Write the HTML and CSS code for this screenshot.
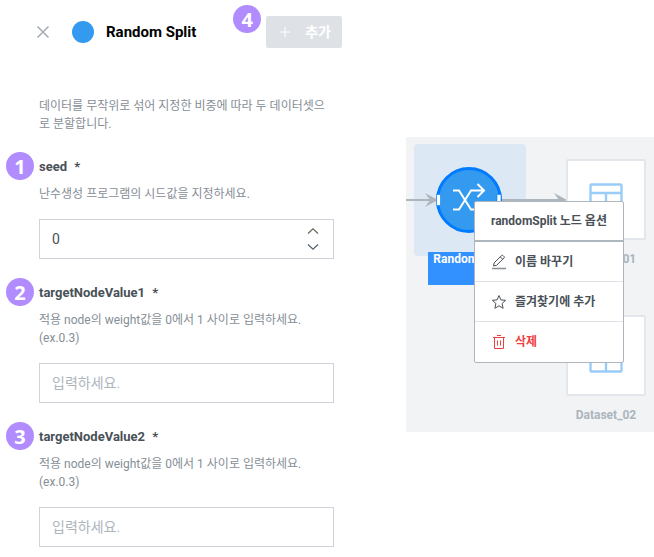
FILE: index.html
```html
<!DOCTYPE html>
<html lang="ko">
<head>
<meta charset="utf-8">
<title>Random Split</title>
<link rel="stylesheet" href="styles.css">
</head>
<body>
<main class="page">
  <form class="panel">
    <header class="panel-header">
      <button class="icon-button" type="button" aria-label="닫기">
        <svg width="14" height="14" viewBox="0 0 14 14"><path d="M1.500 1.500 12.500 12.500M12.500 1.500 1.500 12.500" fill="none" stroke="#a3abb3" stroke-width="1.500"/></svg>
      </button>
      <span class="dot"></span>
      <h1 class="title">Random Split</h1>
      <div class="add-wrap">
        <span class="badge badge-add">4</span>
        <button class="add-button" type="button">
          <svg width="10" height="10" viewBox="0 0 10 10"><path d="M5 0V10M0 5H10" stroke="#fff" stroke-width="1" fill="none"/></svg>
          <span>추가</span>
        </button>
      </div>
    </header>
    <div class="panel-body">
      <p class="hint intro">데이터를 무작위로 섞어 지정한 비중에 따라 두 데이터셋으로 분할합니다.</p>
      <div class="field">
        <span class="badge">1</span>
        <label class="label" for="seed">seed <span class="required">*</span></label>
        <p class="hint">난수생성 프로그램의 시드값을 지정하세요.</p>
        <div class="number-box">
          <input class="input" id="seed" type="text" inputmode="numeric" value="0">
          <div class="stepper">
            <button class="icon-button step" type="button" aria-label="증가"><svg width="12" height="6" viewBox="0 0 12 6"><path d="M1 5.500 6 .8 11 5.500" fill="none" stroke="#6b6459" stroke-width="1.200"/></svg></button>
            <button class="icon-button step" type="button" aria-label="감소"><svg width="12" height="6" viewBox="0 0 12 6"><path d="M1 .5 6 5.200 11 .5" fill="none" stroke="#4f6473" stroke-width="1.200"/></svg></button>
          </div>
        </div>
      </div>
      <div class="field">
        <span class="badge">2</span>
        <label class="label" for="target1">targetNodeValue1 <span class="required">*</span></label>
        <p class="hint">적용 node의 weight값을 0에서 1 사이로 입력하세요. (ex.0.3)</p>
        <input class="input" id="target1" type="text" placeholder="입력하세요.">
      </div>
      <div class="field">
        <span class="badge">3</span>
        <label class="label" for="target2">targetNodeValue2 <span class="required">*</span></label>
        <p class="hint">적용 node의 weight값을 0에서 1 사이로 입력하세요. (ex.0.3)</p>
        <input class="input" id="target2" type="text" placeholder="입력하세요.">
      </div>
    </div>
  </form>

  <section class="canvas">
    <div class="selection"></div>
    <svg class="edges" width="248" height="295" viewBox="0 0 248 295">
      <path d="M0 63H26M95 63H154" stroke="#adb5bd" stroke-width="2"/>
      <path d="M19 56 32 63 19 70 24 63ZM148 56 161 63 148 70 153 63Z" fill="#adb5bd"/>
    </svg>
    <div class="node split-node">
      <svg width="68" height="68" viewBox="0 0 68 68">
        <circle cx="34" cy="34" r="31.500" fill="#339af0" stroke="#007bff" stroke-width="3"/>
        <path d="M18 24.500H24L36 43.500H48M18 43.500H24L36 24.500H49M42.500 18 49 24.500 42.500 31" fill="none" stroke="#fff" stroke-width="2"/>
        <path d="M1.500 28.500h4v11h-4zM62 28.500h4v11h-4z" fill="#fff" stroke="#007bff" stroke-width=".6"/>
      </svg>
    </div>
    <div class="node-label split-label">RandomSplit</div>
    <div class="node dataset first">
      <div class="card"><svg width="34" height="34" viewBox="0 0 34 34"><path d="M2.500 1.500H31.500Q32.500 1.500 32.500 2.500V31.500Q32.500 32.500 31.500 32.500H2.500Q1.500 32.500 1.500 31.500V2.500Q1.500 1.500 2.500 1.500ZM1.500 10H32.500M17 10V32.500M1.500 21H32.500" fill="none" stroke="#99cdf8" stroke-width="2.400"/></svg></div>
      <div class="node-label">Dataset_01</div>
    </div>
    <div class="node dataset second">
      <div class="card"><svg width="34" height="34" viewBox="0 0 34 34"><path d="M2.500 1.500H31.500Q32.500 1.500 32.500 2.500V31.500Q32.500 32.500 31.500 32.500H2.500Q1.500 32.500 1.500 31.500V2.500Q1.500 1.500 2.500 1.500ZM1.500 10H32.500M17 10V32.500" fill="none" stroke="#99cdf8" stroke-width="2.400"/></svg></div>
      <div class="node-label">Dataset_02</div>
    </div>
    <div class="menu">
      <h2 class="menu-title">randomSplit 노드 옵션</h2>
      <button class="menu-item" type="button">
        <svg width="16" height="16" viewBox="0 0 16 16"><path d="M2.500 12 3.200 8.800 10.600 1.600Q11.400 .9 12.200 1.700L13 2.500Q13.700 3.300 12.900 4.100L5.600 11.300ZM9.300 2.900 11.700 5.300" fill="none" stroke="#495057" stroke-width="1"/><path d="M1 14.500H15" stroke="#868e96" stroke-width="1.500"/></svg>
        <span>이름 바꾸기</span>
      </button>
      <button class="menu-item" type="button">
        <svg width="16" height="16" viewBox="0 0 16 16"><path d="M8 1.500 9.900 5.900 14.600 6.300 11.100 9.500 12.100 14.300 8 11.800 3.900 14.300 4.900 9.500 1.400 6.300 6.100 5.900Z" fill="none" stroke="#495057" stroke-width="1"/></svg>
        <span>즐겨찾기에 추가</span>
      </button>
      <button class="menu-item danger" type="button">
        <svg width="16" height="16" viewBox="0 0 16 16"><path d="M2 3.500H14M6 1.500H10M3.500 3.500V14.500H12.500V3.500M6.500 6.500V11.500M9.500 6.500V11.500" fill="none" stroke="#f03e3e" stroke-width="1"/></svg>
        <span>삭제</span>
      </button>
    </div>
  </section>
</main>
</body>
</html>
```
FILE: styles.css
```css
* {
  box-sizing: border-box;
}

body {
  margin: 0;
  background: #fff;
  color: #495057;
  font-family: Roboto, "Noto Sans CJK KR", sans-serif;
  font-size: 12px;
  line-height: 18px;
}

h1,
h2,
p {
  margin: 0;
}

button,
input {
  font: inherit;
  color: inherit;
}

svg {
  display: block;
  flex: none;
}

.page {
  display: grid;
  grid-template-columns: 342fr 248fr;
  column-gap: 64px;
  align-items: start;
}

.panel-header {
  display: flex;
  align-items: center;
  padding: 16px 0 0 36px;
}

.icon-button {
  display: flex;
  padding: 0;
  border: 0;
  background: none;
}

.dot {
  width: 22px;
  height: 22px;
  margin: 0 12px 0 22px;
  border-radius: 50%;
  background: #339af0;
}

.title {
  color: #000;
  font-size: 15px;
  font-weight: 700;
}

.add-wrap {
  position: relative;
  margin-left: auto;
}

.add-button {
  display: flex;
  align-items: center;
  gap: 15px;
  height: 32px;
  padding: 0 11px 0 14px;
  border: 0;
  border-radius: 2px;
  background: #dee2e6;
  color: #fff;
  font-size: 14px;
  font-weight: 700;
}

.badge {
  position: absolute;
  top: -5px;
  left: -33px;
  width: 28px;
  height: 28px;
  border-radius: 50%;
  background: #b18cff;
  color: #fff;
  font-family: "Noto Sans", sans-serif;
  font-size: 20px;
  font-weight: 700;
  line-height: 30px;
  text-align: center;
}

.badge-add {
  top: -11px;
}

.panel-body {
  display: flex;
  flex-direction: column;
  gap: 24px;
  padding: 49px 8px 8px 39px;
}

.hint {
  color: #868e96;
}

.field {
  position: relative;
  display: flex;
  flex-direction: column;
}

.label {
  margin-bottom: 8px;
  font-size: 13px;
  font-weight: 700;
  line-height: 20px;
}

.required {
  margin-left: 4px;
}

.input {
  width: 100%;
  height: 40px;
  padding: 0 12px;
  border: 1px solid #ced4da;
  border-radius: 0;
  background: #fff;
  font-size: 14px;
}

.field > .input,
.number-box {
  margin-top: 16px;
}

.input::placeholder {
  color: #adb5bd;
  opacity: 1;
}

.number-box {
  position: relative;
}

.stepper {
  position: absolute;
  top: 4px;
  right: 15px;
}

.step {
  height: 16px;
  align-items: center;
}

.canvas {
  position: relative;
  min-height: 295px;
  margin-top: 137px;
  background: #f1f3f5;
}

.selection {
  position: absolute;
  top: 7px;
  left: 8px;
  width: 112px;
  height: 112px;
  border-radius: 4px;
  background: #dce8f4;
}

.edges {
  position: absolute;
  top: 0;
  left: 0;
}

.node,
.split-label {
  position: absolute;
}

.split-node {
  top: 29px;
  left: 29px;
}

.node-label {
  color: #adb5bd;
  font-weight: 700;
  line-height: 14px;
  text-align: center;
}

.split-label {
  top: 115px;
  left: 22px;
  width: 80px;
  height: 33px;
  background: #3391ff;
  color: #fff;
}

.dataset {
  left: 160px;
  width: 80px;
}

.first {
  top: 22px;
}

.second {
  top: 178px;
}

.card {
  display: flex;
  align-items: center;
  justify-content: center;
  height: 81px;
  margin-bottom: 12px;
  border: 2px solid #e3e6ea;
  border-radius: 2px;
  background: #fff;
}

.menu {
  position: absolute;
  top: 64px;
  left: 68px;
  width: 150px;
  border: 1px solid #adb5bd;
  border-radius: 2px;
  background: #fff;
}

.menu-title {
  padding: 10px 0 10px 16px;
  border-bottom: 2px solid #adb5bd;
  font-size: 12px;
  font-weight: 700;
  white-space: nowrap;
}

.menu-item {
  display: flex;
  align-items: center;
  gap: 8px;
  width: 100%;
  height: 40px;
  padding: 0 16px;
  border: 0;
  border-bottom: 1px solid #dee2e6;
  background: none;
  font-weight: 700;
  white-space: nowrap;
}

.menu-item:last-child {
  border-bottom: 0;
}

.danger {
  color: #f03e3e;
}
```
